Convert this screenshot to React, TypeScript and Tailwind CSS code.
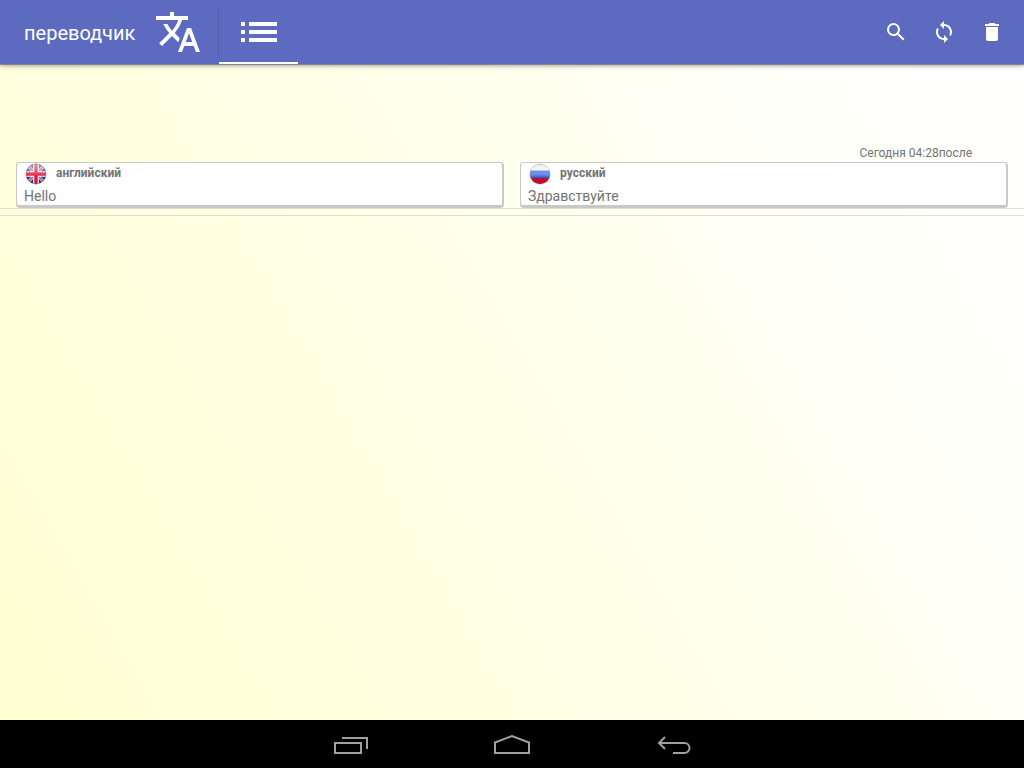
import React from "react";
import { MdDelete, MdList, MdSearch, MdSync, MdTranslate } from "react-icons/md";

const actions = [
  { label: "Поиск", icon: MdSearch },
  { label: "Обновить", icon: MdSync },
  { label: "Удалить", icon: MdDelete },
];

const UkFlag = () => (
  <svg viewBox="0 1 24 22" className="h-[22px] w-6 shrink-0" aria-hidden="true">
    <defs>
      <clipPath id="uk-clip">
        <circle cx="12" cy="12" r="10.2" />
      </clipPath>
      <linearGradient id="uk-gloss" x1="0" y1="0" x2="0" y2="1">
        <stop offset="0" stopColor="#fff" stopOpacity="0.6" />
        <stop offset="0.5" stopColor="#fff" stopOpacity="0.2" />
        <stop offset="0.6" stopColor="#fff" stopOpacity="0" />
      </linearGradient>
    </defs>
    <g clipPath="url(#uk-clip)">
      <rect width="24" height="24" fill="#1d3a82" />
      <path d="M2 2l20 20M22 2L2 22" stroke="#e8e4f0" strokeWidth="3" />
      <path d="M2 2l20 20M22 2L2 22" stroke="#d8324f" strokeWidth="1.3" />
      <path d="M12 0v24M0 12h24" stroke="#fff" strokeWidth="5.6" />
      <path d="M12 0v24M0 12h24" stroke="#dc143c" strokeWidth="3.4" />
      <rect width="24" height="24" fill="url(#uk-gloss)" />
    </g>
    <circle cx="12" cy="12" r="10" fill="none" stroke="#777" strokeOpacity="0.4" strokeWidth="0.7" />
  </svg>
);

const RuFlag = () => (
  <svg viewBox="0 1 24 22" className="h-[22px] w-6 shrink-0" aria-hidden="true">
    <defs>
      <clipPath id="ru-clip">
        <circle cx="12" cy="12" r="10.2" />
      </clipPath>
      <linearGradient id="ru-blue" x1="0" y1="0" x2="0" y2="1">
        <stop offset="0" stopColor="#6f8fe8" />
        <stop offset="0.5" stopColor="#7290ee" />
        <stop offset="1" stopColor="#2e50c4" />
      </linearGradient>
      <linearGradient id="ru-white" x1="0" y1="0" x2="0" y2="1">
        <stop offset="0" stopColor="#e4e4e4" />
        <stop offset="1" stopColor="#fff" />
      </linearGradient>
    </defs>
    <g clipPath="url(#ru-clip)">
      <rect width="24" height="9" fill="url(#ru-white)" />
      <rect y="8.5" width="24" height="7.5" fill="url(#ru-blue)" />
      <rect y="16" width="24" height="8" fill="#c40a2f" />
    </g>
    <circle cx="12" cy="12" r="10" fill="none" stroke="#777" strokeOpacity="0.4" strokeWidth="0.7" />
  </svg>
);

const entries = [
  { lang: "английский", text: "Hello", flag: UkFlag },
  { lang: "русский", text: "Здравствуйте", flag: RuFlag },
];

const Header = () => (
  <header className="relative flex h-[65px] shrink-0 items-stretch border-b border-[#85858f] bg-[#5c6bc0] pl-6 pr-2 text-white shadow-[0_1px_4px_rgba(0,0,0,0.35)]">
    <h1 className="mr-[3px] flex items-center pt-0.5 text-xl">переводчик</h1>
    <nav className="flex">
      <button type="button" aria-label="Перевод" className="flex w-20 items-center justify-center">
        <MdTranslate className="size-12" />
      </button>
      <div className="my-2 w-px bg-[#4f5ca8]" />
      <button
        type="button"
        aria-label="История"
        className="flex w-[79px] items-center justify-center border-y-2 border-t-transparent border-b-white"
      >
        <MdList className="size-12" />
      </button>
    </nav>
    <div className="ml-auto flex">
      {actions.map(({ label, icon: Icon }) => (
        <button key={label} type="button" aria-label={label} className="flex w-12 items-center justify-center">
          <Icon className="size-6" />
        </button>
      ))}
    </div>
  </header>
);

const NavBar = () => (
  <footer className="flex h-12 shrink-0 items-center justify-center gap-[81px] bg-black text-[#a0a0a0]">
    <button type="button" aria-label="Недавние" className="flex h-12 w-20 items-center justify-center">
      <svg viewBox="0 0 40 24" className="h-6 w-10" fill="none" stroke="currentColor" strokeWidth="2">
        <path d="M4 11h26v10H4zM11 6h25v11" />
      </svg>
    </button>
    <button type="button" aria-label="Домой" className="flex h-12 w-20 items-center justify-center">
      <svg viewBox="0 0 40 24" className="h-6 w-10" fill="none" stroke="currentColor" strokeWidth="2">
        <path d="M3 21V10.500L20 4l17 6.500V21z" />
      </svg>
    </button>
    <button type="button" aria-label="Назад" className="flex h-12 w-20 items-center justify-center">
      <svg viewBox="0 0 40 24" className="h-6 w-10" fill="none" stroke="currentColor" strokeWidth="2">
        <path d="M12 5l-6 6 6 6M6 11h25.500a5 5 0 0 1 0 10H20" />
      </svg>
    </button>
  </footer>
);

export default function App() {
  return (
    <div className="flex min-h-screen flex-col bg-black font-[Roboto,sans-serif]">
      <Header />
      <main className="flex-1 bg-[linear-gradient(60deg,#ffffd2,#ffffe6_45%,#fffffa_85%,#ffffff)] pt-20 text-[#737373]">
        <section className="border-b border-[#deded2]">
          <time className="block pr-13 pb-px text-right text-xs leading-4">Сегодня 04:28после</time>
          <div className="grid grid-cols-2 gap-4 px-4">
            {entries.map(({ lang, text, flag: Flag }) => (
              <article
                key={lang}
                className="rounded border border-r-2 border-b-3 border-[#c8c8c4] bg-white pl-[7px]"
              >
                <div className="flex h-6 items-start gap-2">
                  <Flag />
                  <h2 className="text-xs leading-5 font-bold">{lang}</h2>
                </div>
                <p className="text-sm leading-[18px]">{text}</p>
              </article>
            ))}
          </div>
        </section>
        <div className="h-[7px] border-b border-[#deded2]" />
      </main>
      <NavBar />
    </div>
  );
}
